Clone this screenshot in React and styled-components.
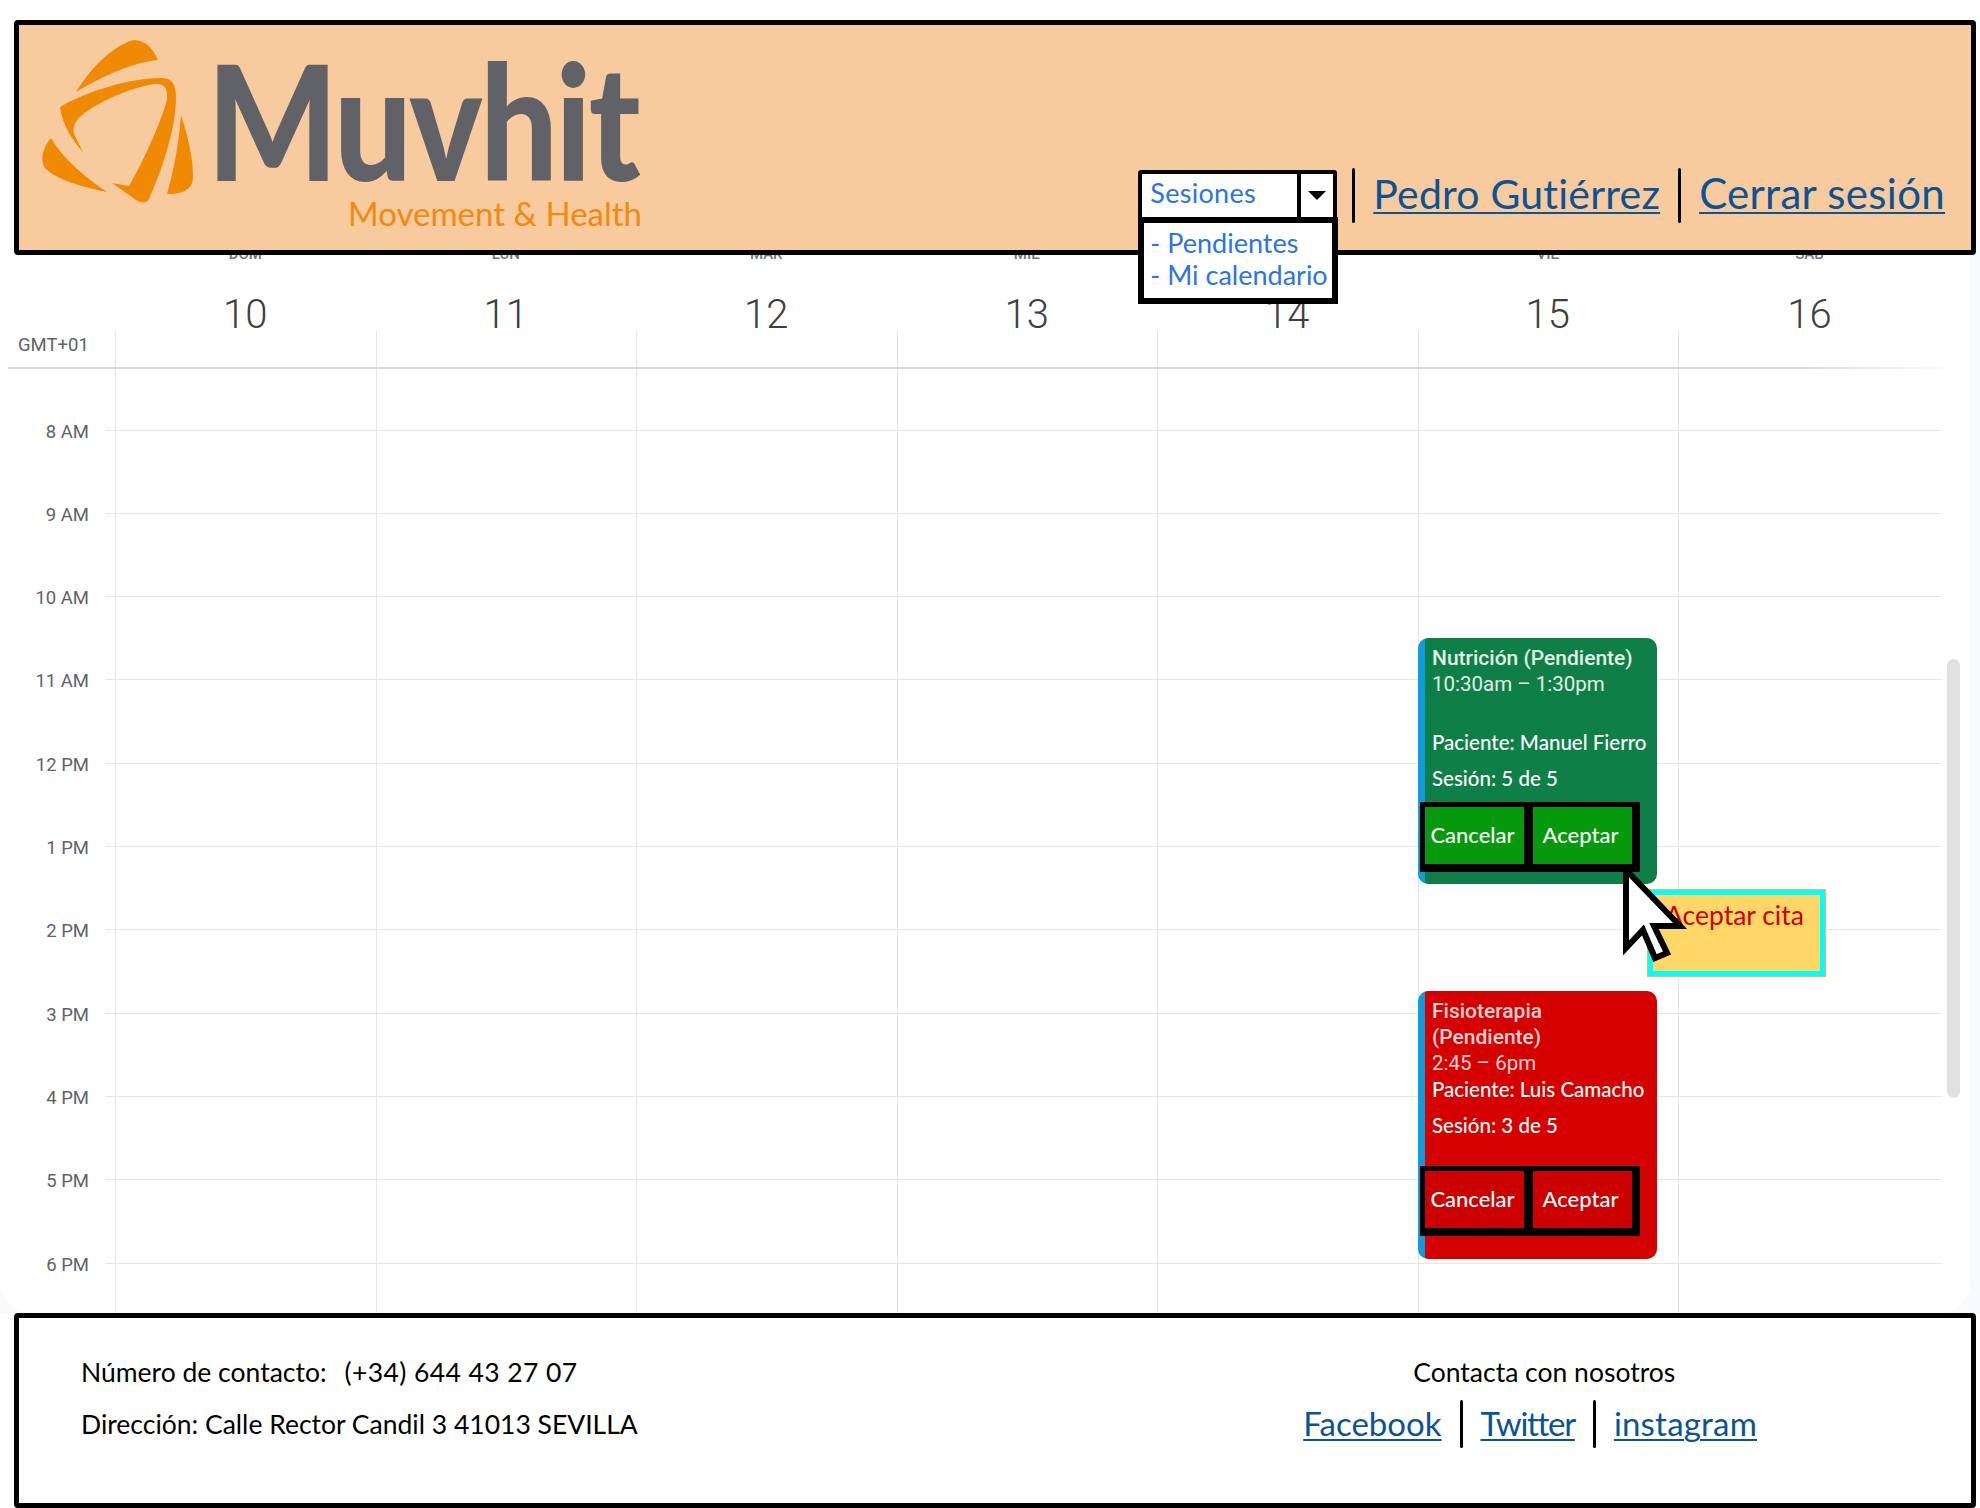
import styled, { createGlobalStyle } from 'styled-components';

const HAND_FONT = '"Lato", "Open Sans", sans-serif';
const CAL_FONT = '"Roboto", "Open Sans", sans-serif';
const LINK_BLUE = '#0b5394';
const ACTION_BLUE = '#2a74e6';
const GRID_LINE = '#e4e6ea';

const GlobalStyle = createGlobalStyle`
  html, body {
    margin: 0;
    padding: 0;
    background: #fff;
  }
  body {
    width: 1980px;
    height: 1508px;
    overflow: hidden;
    font-family: ${HAND_FONT};
  }
`;

const Page = styled.div`
  display: flex;
  flex-direction: column;
  padding-top: 20px;
`;

const Header = styled.header`
  position: relative;
  z-index: 2;
  display: flex;
  justify-content: space-between;
  box-sizing: border-box;
  height: 235px;
  margin: 0 4px 0 14px;
  padding: 15px 26px 0 21px;
  background: #f8cb9e;
  border: 5px solid #000;
  border-radius: 4px;
`;

const Logo = styled.div`
  display: flex;
  align-items: flex-start;
`;

const LogoText = styled.div`
  display: flex;
  flex-direction: column;
  align-items: flex-end;
  width: 435px;
  margin-left: 12px;
`;

const LogoWord = styled.div`
  align-self: flex-start;
  height: 148px;
  padding-top: 7px;
  font-size: 160px;
  line-height: 145px;
  font-weight: 900;
  color: #606268;
  letter-spacing: -3px;
  transform: scaleX(0.86);
  transform-origin: left center;
`;

const LogoTag = styled.div`
  font-size: 33px;
  line-height: 36px;
  white-space: nowrap;
  color: #f08a10;
`;

const Nav = styled.nav`
  display: flex;
  align-items: center;
  align-self: flex-end;
  gap: 18px;
  margin-bottom: 27px;
`;

const Select = styled.div`
  position: relative;
  display: flex;
  box-sizing: border-box;
  width: 199px;
  height: 51px;
  margin-right: -3px;
  background: #fff;
  border: 4px solid #000;
  border-radius: 3px;
`;

const SelectValue = styled.div`
  flex: 1;
  padding-left: 8px;
  font-size: 27px;
  line-height: 38px;
  letter-spacing: 0.3px;
  color: ${ACTION_BLUE};
  border-right: 4px solid #000;
`;

const SelectArrow = styled.div`
  display: flex;
  align-items: center;
  justify-content: center;
  width: 32px;

  &::after {
    content: '';
    border-left: 9px solid transparent;
    border-right: 9px solid transparent;
    border-top: 9px solid #000;
  }
`;

const Menu = styled.ul`
  position: absolute;
  top: 43px;
  left: -4px;
  box-sizing: border-box;
  width: 200px;
  height: 87px;
  margin: 0;
  padding: 4px 0 0 6px;
  list-style: none;
  background: #fff;
  border: 6px solid #000;
`;

const MenuItem = styled.li`
  font-size: 27px;
  line-height: 32px;
  white-space: nowrap;
  color: ${ACTION_BLUE};
`;

const Separator = styled.span`
  display: block;
  width: 3px;
  height: ${(p) => p.$height}px;
  background: #000;
  border-radius: 2px;
`;

const NavLink = styled.a`
  font-size: ${(p) => p.$size}px;
  letter-spacing: ${(p) => p.$spacing || 0}px;
  line-height: 1.2;
  color: ${LINK_BLUE};
  text-decoration: underline;
  text-decoration-thickness: 2px;
  text-underline-offset: 3px;
  white-space: nowrap;
`;

const HeaderLink = styled(NavLink)`
  margin-bottom: 4px;
`;

const CalendarShell = styled.div`
  margin-top: -15px;
  background: #f9fafd;
`;

const Panel = styled.main`
  box-sizing: border-box;
  width: 1970px;
  background: #fff;
  border-radius: 0 0 30px 30px;
  overflow: hidden;
`;

const HeadRow = styled.div`
  display: grid;
  grid-template-columns: 115px repeat(6, 260.5px) 263px;
  height: 127px;
`;

const GmtCell = styled.div`
  align-self: end;
  padding: 0 0 12px 18px;
  font-family: ${CAL_FONT};
  font-size: 18.5px;
  line-height: 20px;
  color: #5f6368;
`;

const DayCell = styled.div`
  display: flex;
  flex-direction: column;
  align-items: center;
  font-family: ${CAL_FONT};
`;

const DayName = styled.div`
  margin-top: 5px;
  font-size: 15px;
  line-height: 18px;
  font-weight: 500;
  color: #70757a;
`;

const DayNumber = styled.div`
  margin: 29px 0 -7px;
  font-size: 40px;
  line-height: 46px;
  font-weight: 300;
  color: #3c4043;
`;

const DayTick = styled.div`
  align-self: flex-start;
  margin-top: auto;
  height: 36px;
  border-left: 1px solid ${GRID_LINE};
`;

const HeadRule = styled.div`
  height: 2px;
  margin-left: 8px;
  width: 1950px;
  background: linear-gradient(to right, #d9dbde 92%, #ffffff 100%);
`;

const Body = styled.div`
  position: relative;
`;

const HourRow = styled.div`
  display: grid;
  grid-template-columns: 115px repeat(6, 260.5px) 263px;
  height: ${(p) => p.$height}px;
`;

const Gutter = styled.div`
  position: relative;
  display: flex;
  align-items: flex-end;
  justify-content: flex-end;
  padding-right: 26px;

  &::after {
    content: '';
    position: absolute;
    right: 0;
    bottom: 0;
    width: 10px;
    height: 1px;
    background: ${(p) => (p.$ruled ? GRID_LINE : 'transparent')};
  }
`;

const HourLabel = styled.span`
  font-family: ${CAL_FONT};
  font-size: 18.5px;
  line-height: 20px;
  color: #5f6368;
  transform: translateY(calc(50% + 1px));
`;

const GridCell = styled.div`
  box-sizing: border-box;
  border-left: 1px solid ${GRID_LINE};
  border-bottom: 1px solid ${(p) => (p.$ruled ? GRID_LINE : 'transparent')};
`;

const ScrollThumb = styled.div`
  position: absolute;
  top: 290px;
  left: 1947px;
  width: 13px;
  height: 439px;
  background: #e1e1e1;
  border-radius: 7px;
`;

const EventCard = styled.article`
  position: absolute;
  left: 1418px;
  top: ${(p) => p.$top}px;
  box-sizing: border-box;
  width: 239px;
  height: ${(p) => p.$height}px;
  padding: 7px 0 0 14px;
  background: linear-gradient(to right, #0f9bdc 7px, ${(p) => p.$color} 7px);
  border-radius: 10px;
  font-family: ${HAND_FONT};
`;

const EventTitle = styled.div`
  font-family: ${CAL_FONT};
  font-size: 21px;
  line-height: 26px;
  font-weight: 500;
  color: ${(p) => p.$tint};
`;

const EventTime = styled.div`
  font-family: ${CAL_FONT};
  font-size: 20.5px;
  line-height: 26px;
  color: ${(p) => p.$tint};
`;

const EventDetail = styled.div`
  margin-top: ${(p) => p.$gap}px;
  font-size: 20.5px;
  line-height: 27px;
  font-weight: 500;
  white-space: nowrap;
  color: #fff;
`;

const EventActions = styled.div`
  display: flex;
  margin: ${(p) => p.$gap}px 0 0 -12px;
`;

const ActionButton = styled.button`
  box-sizing: border-box;
  width: 112px;
  height: 70px;
  padding: 0 4px 3px 0;
  background: ${(p) => p.$color};
  border-style: solid;
  border-color: #000;
  border-width: 5px 8px 8px 5px;
  font-family: ${HAND_FONT};
  font-size: 22px;
  font-weight: 500;
  color: #fff;

  & + & {
    margin-left: -4px;
  }
`;

const Tooltip = styled.div`
  position: absolute;
  left: 1648px;
  top: 521px;
  box-sizing: border-box;
  width: 177px;
  height: 86px;
  padding: 4px 0 0 12px;
  background: #ffd766;
  border: 5px solid #00ffff;
  outline: 1px solid #f2b84b;
  font-size: 26.5px;
  line-height: 32px;
  white-space: nowrap;
  color: #cc0000;
`;

const PointerIcon = styled.svg`
  position: absolute;
  left: 1617px;
  top: 495px;
  z-index: 1;
`;

const Footer = styled.footer`
  display: flex;
  justify-content: space-between;
  box-sizing: border-box;
  height: 195px;
  margin: 0 4px 0 14px;
  padding: 39px 214px 0 62px;
  background: #fff;
  border: 5px solid #000;
  border-radius: 4px;
  font-size: 26.5px;
  line-height: 30px;
  color: #000;
`;

const FooterInfo = styled.div`
  display: flex;
  flex-direction: column;
  gap: 22px;
`;

const Phone = styled.span`
  margin-left: 18px;
  letter-spacing: 0.4px;
`;

const FooterContact = styled.div`
  display: flex;
  flex-direction: column;
`;

const ContactTitle = styled.div`
  margin-left: 110px;
`;

const SocialLinks = styled.div`
  display: flex;
  align-items: center;
  gap: 18px;
  margin-top: 13px;
`;

const days = [
  ['DOM', 10],
  ['LUN', 11],
  ['MAR', 12],
  ['MIÉ', 13],
  ['JUE', 14],
  ['VIE', 15],
  ['SÁB', 16],
];

const rows = [
  { label: '8 AM', height: 62 },
  { label: '9 AM', height: 83 },
  { label: '10 AM', height: 83 },
  { label: '11 AM', height: 83 },
  { label: '12 PM', height: 84 },
  { label: '1 PM', height: 83 },
  { label: '2 PM', height: 83 },
  { label: '3 PM', height: 84 },
  { label: '4 PM', height: 83 },
  { label: '5 PM', height: 83 },
  { label: '6 PM', height: 84 },
  { label: '', height: 49, open: true },
];

const events = [
  {
    top: 269,
    height: 246,
    color: '#0e7f47',
    tint: '#e3f0e8',
    button: '#059a0b',
    title: ['Nutrición (Pendiente)'],
    time: '10:30am – 1:30pm',
    patient: 'Paciente: Manuel Fierro',
    session: 'Sesión: 5 de 5',
    patientGap: 32,
    actionsGap: 10,
  },
  {
    top: 622,
    height: 268,
    color: '#d50000',
    tint: '#f8d2d2',
    button: '#cc0000',
    title: ['Fisioterapia', '(Pendiente)'],
    time: '2:45 – 6pm',
    patient: 'Paciente: Luis Camacho',
    session: 'Sesión: 3 de 5',
    patientGap: 0,
    actionsGap: 27,
  },
];

function LogoMark() {
  return (
    <svg width="155" height="165" viewBox="40 40 155 165" fill="#f08a05">
      <path d="M76 92 C92 66 112 48 130 41 C142 38 152 46 158 60 C136 62 106 74 76 92 Z" />
      <path d="M60 107 C90 90 130 78 162 78 C172 78 176 84 176 98 C176 130 160 175 149 199 C146 204 141 203 136 200 L112 183 L129 186 C145 158 160 124 167 100 C168 88 164 83 155 84 C130 88 104 100 89 110 C76 118 72 126 74 134 L83 152 C72 140 62 124 60 107 Z" />
      <path d="M51 138 C44 146 41 156 43 164 C46 176 80 187 107 192 C84 176 64 160 51 138 Z" />
      <path d="M181 115 C188 136 193 158 193 176 C193 188 186 194 167 194 C174 170 179 142 181 115 Z" />
    </svg>
  );
}

function Pointer() {
  return (
    <PointerIcon width="72" height="100" viewBox="0 0 72 100">
      <path
        d="M9 6 L9 84 L26 66 L38 94 L50 89 L37 62 L63 62 Z"
        fill="#fff"
        stroke="#000"
        strokeWidth="6"
        strokeLinejoin="miter"
      />
    </PointerIcon>
  );
}

function CalendarEvent({ event }) {
  return (
    <EventCard $top={event.top} $height={event.height} $color={event.color}>
      {event.title.map((line) => (
        <EventTitle key={line} $tint={event.tint}>
          {line}
        </EventTitle>
      ))}
      <EventTime $tint={event.tint}>{event.time}</EventTime>
      <EventDetail $gap={event.patientGap}>{event.patient}</EventDetail>
      <EventDetail $gap={9}>{event.session}</EventDetail>
      <EventActions $gap={event.actionsGap}>
        <ActionButton $color={event.button}>Cancelar</ActionButton>
        <ActionButton $color={event.button}>Aceptar</ActionButton>
      </EventActions>
    </EventCard>
  );
}

export default function App() {
  return (
    <Page>
      <GlobalStyle />
      <Header>
        <Logo>
          <LogoMark />
          <LogoText>
            <LogoWord>Muvhit</LogoWord>
            <LogoTag>Movement &amp; Health</LogoTag>
          </LogoText>
        </Logo>
        <Nav>
          <Select>
            <SelectValue>Sesiones</SelectValue>
            <SelectArrow />
            <Menu>
              <MenuItem>- Pendientes</MenuItem>
              <MenuItem>- Mi calendario</MenuItem>
            </Menu>
          </Select>
          <Separator $height={55} />
          <HeaderLink $size={41} $spacing={0.2}>
            Pedro Gutiérrez
          </HeaderLink>
          <Separator $height={55} />
          <HeaderLink $size={42} $spacing={0.3}>
            Cerrar sesión
          </HeaderLink>
        </Nav>
      </Header>

      <CalendarShell>
        <Panel>
          <HeadRow>
            <GmtCell>GMT+01</GmtCell>
            {days.map(([name, number]) => (
              <DayCell key={name}>
                <DayName>{name}</DayName>
                <DayNumber>{number}</DayNumber>
                <DayTick />
              </DayCell>
            ))}
          </HeadRow>
          <HeadRule />
          <Body>
            {rows.map((row, index) => (
              <HourRow key={index} $height={row.height}>
                <Gutter $ruled={!row.open}>
                  <HourLabel>{row.label}</HourLabel>
                </Gutter>
                {days.map(([name]) => (
                  <GridCell key={name} $ruled={!row.open} />
                ))}
              </HourRow>
            ))}
            <ScrollThumb />
            {events.map((event) => (
              <CalendarEvent key={event.time} event={event} />
            ))}
            <Tooltip>Aceptar cita</Tooltip>
            <Pointer />
          </Body>
        </Panel>
      </CalendarShell>

      <Footer>
        <FooterInfo>
          <div>
            Número de contacto:<Phone>(+34) 644 43 27 07</Phone>
          </div>
          <div>Dirección: Calle Rector Candil 3 41013 SEVILLA</div>
        </FooterInfo>
        <FooterContact>
          <ContactTitle>Contacta con nosotros</ContactTitle>
          <SocialLinks>
            <NavLink $size={33}>Facebook</NavLink>
            <Separator $height={48} />
            <NavLink $size={33} $spacing={-1.3}>
              Twitter
            </NavLink>
            <Separator $height={48} />
            <NavLink $size={33} $spacing={0.2}>
              instagram
            </NavLink>
          </SocialLinks>
        </FooterContact>
      </Footer>
    </Page>
  );
}
